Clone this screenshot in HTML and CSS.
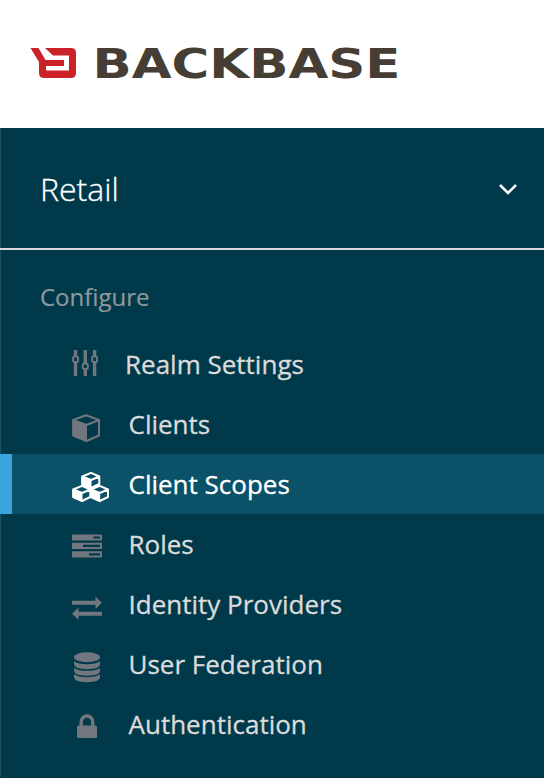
FILE: index.html
```html
<!DOCTYPE html>
<html lang="en">
<head>
<meta charset="utf-8">
<title>Client Scopes</title>
<link rel="stylesheet" href="styles.css">
</head>
<body>
<header class="brand">
  <svg class="logo" viewBox="0 0 390 50" width="390" height="50">
    <path fill="#cb2229" d="M0.500 10H8.500L15.500 22H34V28H16V32.500H39V17.500H23L15 10H41Q46 10 46 15V35Q46 40 41 40H14Q9 40 9 35V24Z"/>
    <text class="wordmark" x="62.500" y="40" textLength="308" lengthAdjust="spacingAndGlyphs">BACKBASE</text>
  </svg>
</header>
<aside class="sidebar">
  <div class="realm">
    <span>Retail</span>
    <svg class="chevron" viewBox="0 0 20 12" width="20" height="12"><path d="M2 2L10 10L18 2"/></svg>
  </div>
  <h2 class="heading">Configure</h2>
  <nav class="menu">
    <a class="item settings">
      <svg class="icon" viewBox="0 0 40 60"><path class="bar" d="M3.500 16v6M3.500 28v14M13.300 16v14M13.300 36v6M22.600 16v6M22.600 28v14"/><g class="line"><rect x="1.100" y="22.600" width="5" height="5.500" rx="1.500"/><rect x="10.800" y="29.600" width="5" height="5.500" rx="1.500"/><rect x="20.100" y="22.600" width="5" height="5.500" rx="1.500"/></g></svg>
      <span>Realm Settings</span>
    </a>
    <a class="item">
      <svg class="icon" viewBox="0 0 40 60"><path class="line" d="M1.200 26L14 21.300L27 26V41.500L14.500 47L1.200 41.500ZM1.200 26L14.500 31L27 26"/><path d="M0.500 26L15 31V48L0.500 42Z"/></svg>
      <span>Clients</span>
    </a>
    <a class="item active">
      <svg class="icon" viewBox="0 0 40 60"><g id="cube"><path class="line" d="M1.200 35.500L10 31.800L18.300 35.500V43L10 47L1.200 43ZM1.200 35.500L10 39L18.300 35.500"/><path d="M0.500 35.500L10.500 39V48L0.500 43.500Z"/></g><use href="#cube" x="17.700"/><use href="#cube" x="9" y="-13"/></svg>
      <span>Client Scopes</span>
    </a>
    <a class="item">
      <svg class="icon" viewBox="0 0 40 60"><path transform="translate(0 .5)" fill-rule="evenodd" d="M1 20H29Q30 20 30 21V26H0V21Q0 20 1 20ZM21.500 22V24H28V22ZM0 28.200H30V34.500H0ZM11 30.200V32.400H28V30.200ZM0 36.700H30V42Q30 43 29 43H1Q0 43 0 42ZM17 38.700V41H28V38.700Z"/></svg>
      <span>Roles</span>
    </a>
    <a class="item">
      <svg class="icon" viewBox="0 0 40 60"><path transform="translate(0 .7)" d="M0 26H23.500V22L30 28L23.500 34.300V30H0ZM30 37V41H6.500V45L0 39L6.500 32.700V37Z"/></svg>
      <span>Identity Providers</span>
    </a>
    <a class="item">
      <svg class="icon" viewBox="0 0 40 60"><ellipse cx="15" cy="23.300" rx="13" ry="5"/><path id="disk" d="M2 27.300Q6 30.200 15 30.200T28 27.300V30Q28 35.200 15 35.200T2 30Z"/><use href="#disk" y="6.600"/><use href="#disk" y="13"/></svg>
      <span>User Federation</span>
    </a>
    <a class="item">
      <svg class="icon" viewBox="0 0 40 60"><g transform="translate(0 .6)"><rect x="5" y="30.800" width="20" height="12.700" rx="1.500"/><path class="shackle" d="M9.200 32V27.500A5.700 6 0 0 1 20.800 27.500V32"/></g></svg>
      <span>Authentication</span>
    </a>
  </nav>
</aside>
</body>
</html>
```
FILE: styles.css
```css
* {
  box-sizing: border-box;
}

body {
  margin: 0;
  height: 778px;
  display: flex;
  flex-direction: column;
  background: #fff;
  font-family: "Open Sans", sans-serif;
}

.brand {
  height: 128px;
  padding: 38px 0 0 30px;
}

.logo {
  display: block;
}

.wordmark {
  font: bold 41px "DejaVu Sans", sans-serif;
  fill: #463e35;
}

.sidebar {
  flex: 1;
  background: linear-gradient(#1f5261, #1f5261) 0 0 / 1px 100% no-repeat #003a4a;
  border-bottom: 1px solid #00303e;
}

.realm {
  height: 122px;
  padding: 2px 26px 0 40px;
  display: flex;
  align-items: center;
  justify-content: space-between;
  border-bottom: 2px solid #d9d9d9;
  color: #fff;
  font-size: 32px;
  font-weight: 300;
  -webkit-text-stroke: 0.3px #fff;
}

.realm span {
  padding-bottom: 1px;
}

.chevron {
  fill: none;
  stroke: #fff;
  stroke-width: 2.5;
}

.heading {
  margin: 0;
  height: 84px;
  padding: 30px 0 0 40px;
  color: #8f989b;
  font-size: 24px;
  font-weight: 400;
  line-height: 34px;
  -webkit-text-stroke: 0.2px #8f989b;
}

.item {
  height: 60px;
  padding-left: 72px;
  display: flex;
  align-items: center;
  gap: 16.5px;
  color: #dbdbdb;
  font-size: 26px;
  -webkit-text-stroke: 0.3px currentColor;
}

.settings {
  gap: 13px;
}

.icon {
  width: 40px;
  height: 60px;
  flex: none;
  color: #72767f;
  fill: currentColor;
}

.icon .line,
.icon .bar,
.icon .shackle {
  fill: none;
  stroke: currentColor;
  stroke-width: 2;
  stroke-linejoin: round;
}

.icon .bar,
.icon .shackle {
  stroke-width: 3.4;
}

.active {
  padding-left: 60px;
  border-left: 12px solid #39a5dc;
  background: #0b5167;
  color: #fff;
}

.active .icon {
  color: #fff;
}
```
